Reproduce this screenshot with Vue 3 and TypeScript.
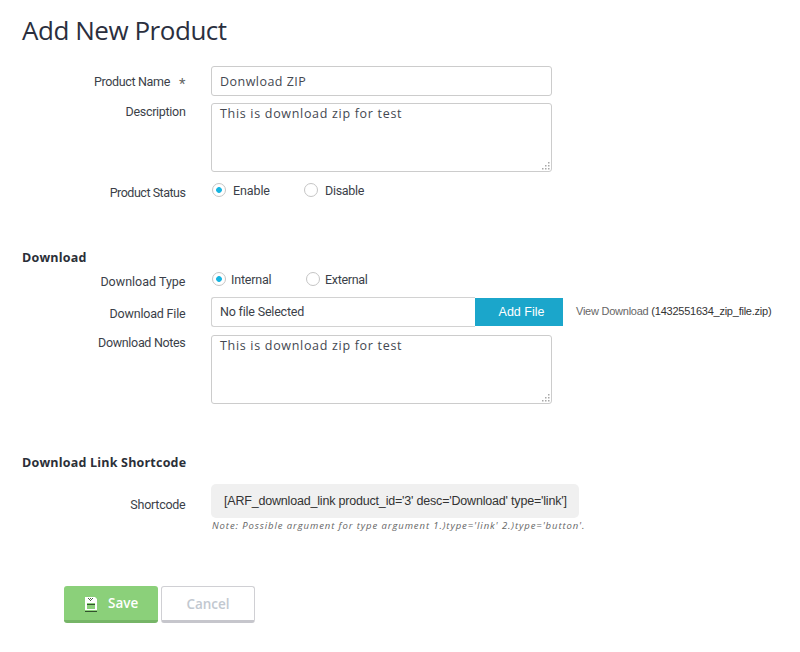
<script setup lang="ts">
import { ref } from 'vue'

const productName = ref('Donwload ZIP')
const description = ref('This is download zip for test')
const notes = ref('This is download zip for test')
const status = ref<'enable' | 'disable'>('enable')
const downloadType = ref<'internal' | 'external'>('internal')
const shortcode = "[ARF_download_link product_id='3' desc='Download' type='link']"
</script>

<template>
  <main class="page">
    <h1 class="title">Add New Product</h1>

    <div class="row name-row">
      <label class="label l-name"><span class="t-name">Product Name</span><span class="star">*</span></label>
      <input v-model="productName" class="input" type="text" />
    </div>
    <div class="row desc-row">
      <label class="label l-desc">Description</label>
      <div class="area-wrap">
        <textarea v-model="description" class="area"></textarea>
        <svg class="grip" width="8" height="8" viewBox="0 0 8 8"><path d="M6 0h1.5v1.5h-1.5zM3 3h1.5v1.5h-1.5zM6 3h1.5v1.5h-1.5zM0 6h1.5v1.5h-1.5zM3 6h1.5v1.5h-1.5zM6 6h1.5v1.5h-1.5z" /></svg>
      </div>
    </div>
    <div class="row status-row">
      <span class="label l-status">Product Status</span>
      <div class="radios">
        <label class="radio r-enable"><input v-model="status" type="radio" value="enable" /><span>Enable</span></label>
        <label class="radio r-disable"><input v-model="status" type="radio" value="disable" /><span>Disable</span></label>
      </div>
    </div>

    <h2 class="section s-download">Download</h2>
    <div class="row type-row">
      <span class="label l-type">Download Type</span>
      <div class="radios">
        <label class="radio r-internal"><input v-model="downloadType" type="radio" value="internal" /><span>Internal</span></label>
        <label class="radio r-external"><input v-model="downloadType" type="radio" value="external" /><span>External</span></label>
      </div>
    </div>
    <div class="row file-row">
      <span class="label l-file">Download File</span>
      <div class="file">
        <div class="file-box">No file Selected</div>
        <button class="add" type="button">Add File</button>
        <span class="view"><a class="view-link">View Download</a> <span class="fname">(1432551634_zip_file.zip)</span></span>
      </div>
    </div>
    <div class="row notes-row">
      <label class="label l-notes">Download Notes</label>
      <div class="area-wrap">
        <textarea v-model="notes" class="area"></textarea>
        <svg class="grip" width="8" height="8" viewBox="0 0 8 8"><path d="M6 0h1.5v1.5h-1.5zM3 3h1.5v1.5h-1.5zM6 3h1.5v1.5h-1.5zM0 6h1.5v1.5h-1.5zM3 6h1.5v1.5h-1.5zM6 6h1.5v1.5h-1.5z" /></svg>
      </div>
    </div>

    <h2 class="section s-short">Download Link Shortcode</h2>
    <div class="row short-row">
      <span class="label l-short">Shortcode</span>
      <div>
        <div class="code">{{ shortcode }}</div>
        <p class="note">Note: Possible argument for type argument 1.)type='link' 2.)type='button'.</p>
      </div>
    </div>

    <div class="actions">
      <button class="btn save" type="button">
        <svg class="disk" width="12" height="15" viewBox="0 0 12 15">
          <path fill="#fff" d="M0 0h10l2 2v11H0z" />
          <path fill="#4c6a46" d="M3 1h1v1H3zM5 1h1v1H5zM7 1h1v1H7zM4 2h1v1H4zM6 2h1v1H6zM5 3h1v1H5z" />
          <path fill="#8bd07a" d="M2 6h8v6H2z" />
          <path fill="#33502e" d="M2 7h8v1H2zM0 14h12v1H0z" />
        </svg>
        <span>Save</span>
      </button>
      <button class="btn cancel" type="button">Cancel</button>
    </div>
  </main>
</template>

<style>
body { margin: 0; background: #fff; }
</style>

<style scoped>
.page { width: 800px; height: 652px; box-sizing: border-box; overflow: hidden; background: #fff; color: #3b3f49; font-family: Roboto, "Liberation Sans", sans-serif; font-size: 12.5px; }
.title { margin: 0; height: 66px; padding: 12px 0 0 22px; box-sizing: border-box; font: 400 26px/36px "Open Sans", sans-serif; color: #2b2f3e; letter-spacing: -0.46px; }
.row { display: grid; grid-template-columns: 185.5px 1fr; column-gap: 25.5px; }
.label { justify-self: end; line-height: 16px; white-space: nowrap; }
.name-row { height: 37px; }
.desc-row { height: 79px; }
.status-row { height: 66px; }
.type-row { height: 26px; }
.file-row { height: 38px; }
.notes-row { height: 118px; }
.short-row { height: 102px; }
.l-name { display: flex; gap: 9px; padding-top: 8px; }
.t-name { letter-spacing: -0.33px; }
.star { font-size: 15px; line-height: 20px; color: #666; }
.l-desc { padding-top: 1px; letter-spacing: -0.3px; }
.l-status { padding-top: 3px; letter-spacing: -0.48px; }
.l-type { padding-top: 3px; }
.l-file { padding-top: 9px; letter-spacing: -0.18px; }
.l-notes { letter-spacing: -0.32px; }
.l-short { padding-top: 13px; letter-spacing: -0.25px; }
.input, .area { box-sizing: border-box; width: 341px; border: 1px solid #ccc; border-radius: 3px; background: #fff; color: #444851; font: 400 12.5px/18px "Open Sans", sans-serif; outline: none; margin: 0; display: block; }
.input { height: 30px; padding: 0 8px; letter-spacing: 0.47px; }
.area { height: 69px; padding: 1px 8px 0; letter-spacing: 0.69px; resize: none; overflow: hidden; }
.area-wrap { position: relative; width: 341px; height: 69px; }
.grip { position: absolute; right: 2px; bottom: 2px; fill: #a8a8a8; }
.radios { display: flex; align-items: flex-start; }
.radio { display: flex; align-items: center; height: 16px; white-space: nowrap; }
.radio input { appearance: none; margin: 0 0 0 1px; width: 14px; height: 14px; box-sizing: border-box; border: 1px solid #c5c5c5; border-radius: 50%; background: #fff; }
.radio input:checked { background: radial-gradient(circle, #17b4e0 0 2.5px, #fff 3.2px); }
.r-enable { width: 92px; letter-spacing: -0.1px; }
.r-enable span, .r-disable span { margin-left: 7px; }
.r-disable { letter-spacing: -0.3px; }
.r-internal { width: 94px; letter-spacing: -0.2px; }
.r-internal span, .r-external span { margin-left: 5px; }
.r-external { letter-spacing: -0.3px; }
.section { margin: 0; padding-left: 22px; font: 700 12.5px/18px "Open Sans", sans-serif; letter-spacing: 0.2px; color: #2b2f38; }
.s-download { height: 23px; padding-top: 1px; box-sizing: border-box; }
.s-short { height: 31px; padding-top: 1px; box-sizing: border-box; }
.file { display: flex; height: 30px; }
.file-box { box-sizing: border-box; width: 264px; height: 30px; padding-left: 8px; border: 1px solid #d2d2d2; border-right: 0; border-radius: 3px 0 0 3px; line-height: 28px; letter-spacing: -0.2px; }
.add { box-sizing: border-box; width: 88px; height: 28px; margin: 1px 0 0; padding: 0 0 0 5px; border: 0; background: #1ba6cb; color: #fff; font: 12.5px/28px "Liberation Sans", sans-serif; }
.view { margin-left: 13px; font: 11px/29px "Liberation Sans", sans-serif; letter-spacing: -0.24px; white-space: nowrap; color: #333; }
.view-link { color: #666; }
.code { width: 368px; height: 34px; box-sizing: border-box; padding-left: 13px; border-radius: 5px; background: #f0f0f0; font: 12.5px/34px "Liberation Sans", sans-serif; letter-spacing: -0.19px; color: #333; white-space: nowrap; }
.note { margin: 0; padding-left: 1px; font: italic 9.5px/15px "Open Sans", sans-serif; letter-spacing: 0.91px; color: #666; white-space: nowrap; }
.actions { display: flex; gap: 3px; padding-left: 64px; }
.btn { box-sizing: border-box; height: 37px; width: 94px; margin: 0; padding: 0; border-radius: 3px; font: 600 13.5px/18px "Open Sans", sans-serif; display: flex; align-items: center; }
.save { border: 0; border-bottom: 3px solid #76b567; background: #8bd07a; color: #fff; padding-left: 21px; }
.disk { margin-top: 2px; }
.save span { margin-left: 11px; }
.cancel { border: 1px solid #d0d0d4; border-bottom: 3px solid #c6c6cc; background: #fff; color: #c2c8d0; justify-content: center; }
</style>
